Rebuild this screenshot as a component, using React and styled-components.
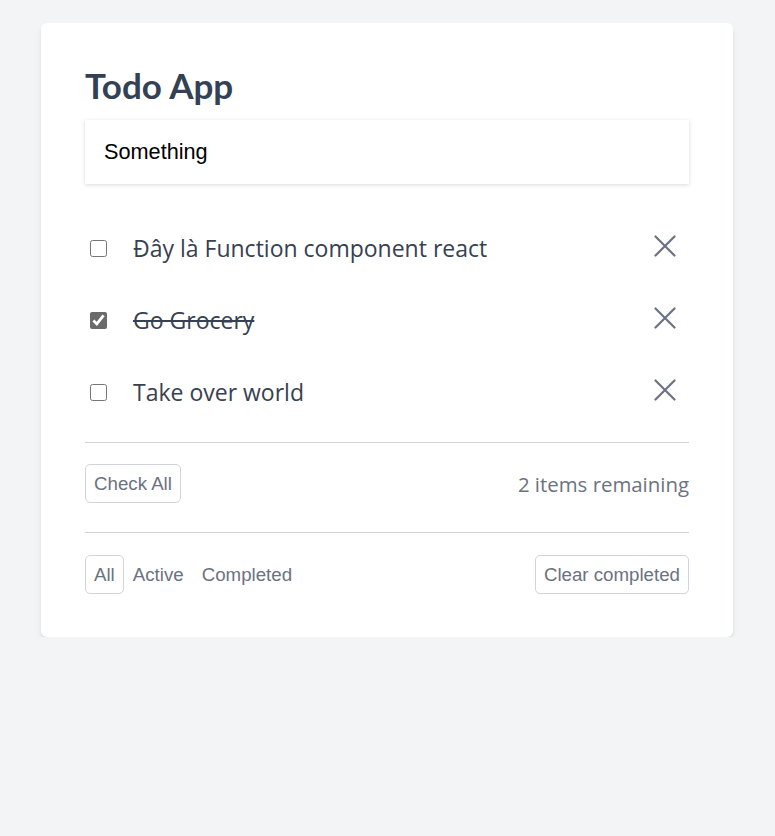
import React, { useState } from "react";
import styled, { createGlobalStyle } from "styled-components";

const GlobalStyle = createGlobalStyle`
  body {
    margin: 0;
    background: #f3f4f6;
    font-family: "Open Sans", "Liberation Sans", sans-serif;
  }
`;

const Card = styled.div`
  width: 692px;
  box-sizing: border-box;
  margin: 23px 0 0 41px;
  padding: 40px 44px 43px;
  background: #fff;
  border-radius: 6px;
  box-shadow: 0 4px 6px -1px rgba(0, 0, 0, 0.1), 0 2px 4px -2px rgba(0, 0, 0, 0.1);
`;

const Title = styled.h1`
  margin: 0 0 13px;
  font-family: "Lato", "Open Sans", sans-serif;
  font-size: 35px;
  line-height: 44px;
  font-weight: 700;
  color: #334155;
`;

const NewTodo = styled.input`
  display: block;
  width: 100%;
  box-sizing: border-box;
  height: 64px;
  padding: 0 19px;
  border: none;
  outline: none;
  font-family: "Liberation Sans", Arial, sans-serif;
  font-size: 21.7px;
  color: #000;
  box-shadow: 0 1px 4px rgba(0, 0, 0, 0.15);
`;

const List = styled.div`
  margin: 28px 0 14px;
`;

const Row = styled.div`
  display: flex;
  align-items: center;
  padding: 20px 0;
`;

const Check = styled.input`
  width: 17px;
  height: 17px;
  margin: 0 26px 0 5px;
  accent-color: #6b6b6b;
`;

const Label = styled.span`
  flex: 1;
  font-size: 23px;
  line-height: 32px;
  color: #374151;
  text-decoration: ${(p) => (p.$done ? "line-through" : "none")};
`;

const Remove = styled.button`
  display: flex;
  padding: 0;
  margin: 0 13px 5px 0;
  border: none;
  background: none;
  color: #6b7280;
  cursor: pointer;
`;

const Divider = styled.div`
  height: 1px;
  background: #d4d4d4;
`;

const Bar = styled.div`
  display: flex;
  align-items: center;
  justify-content: space-between;
  padding: ${(p) => p.$pad};
`;

const Group = styled.div`
  display: flex;
`;

const Button = styled.button`
  padding: 8px;
  border: 1px solid ${(p) => (p.$active ? "#d1d5db" : "transparent")};
  border-radius: 5px;
  background: #fff;
  font-family: "Liberation Sans", Arial, sans-serif;
  font-size: 18.7px;
  line-height: 21px;
  color: #6b7280;
  cursor: pointer;
`;

const Remaining = styled.span`
  font-size: 20.4px;
  color: #6b7280;
`;

const XIcon = () => (
  <svg width="22" height="22" viewBox="0 0 22 22" fill="none" stroke="currentColor" strokeWidth="2.2" strokeLinecap="round">
    <path d="M1.5 1.5L20.5 20.5M20.5 1.5L1.5 20.5" />
  </svg>
);

const initial = [
  { id: 1, title: "Đây là Function component react", done: false },
  { id: 2, title: "Go Grocery", done: true },
  { id: 3, title: "Take over world", done: false },
];

export default function App() {
  const [todos, setTodos] = useState(initial);
  const [text, setText] = useState("Something");
  const [filter, setFilter] = useState("all");

  const remaining = todos.filter((t) => !t.done).length;
  const shown = todos.filter((t) =>
    filter === "active" ? !t.done : filter === "completed" ? t.done : true
  );

  const toggle = (id) =>
    setTodos((ts) => ts.map((t) => (t.id === id ? { ...t, done: !t.done } : t)));

  return (
    <>
      <GlobalStyle />
      <Card>
        <Title>Todo App</Title>
        <NewTodo value={text} onChange={(e) => setText(e.target.value)} />
        <List>
          {shown.map((t) => (
            <Row key={t.id}>
              <Check type="checkbox" checked={t.done} onChange={() => toggle(t.id)} />
              <Label $done={t.done}>{t.title}</Label>
              <Remove onClick={() => setTodos((ts) => ts.filter((x) => x.id !== t.id))}>
                <XIcon />
              </Remove>
            </Row>
          ))}
        </List>
        <Divider />
        <Bar $pad="21px 0 29px">
          <Button $active onClick={() => setTodos((ts) => ts.map((t) => ({ ...t, done: true })))}>
            Check All
          </Button>
          <Remaining>{remaining} items remaining</Remaining>
        </Bar>
        <Divider />
        <Bar $pad="22px 0 0">
          <Group>
            <Button $active={filter === "all"} onClick={() => setFilter("all")}>All</Button>
            <Button $active={filter === "active"} onClick={() => setFilter("active")}>Active</Button>
            <Button $active={filter === "completed"} onClick={() => setFilter("completed")}>Completed</Button>
          </Group>
          <Button $active onClick={() => setTodos((ts) => ts.filter((t) => !t.done))}>
            Clear completed
          </Button>
        </Bar>
      </Card>
    </>
  );
}
